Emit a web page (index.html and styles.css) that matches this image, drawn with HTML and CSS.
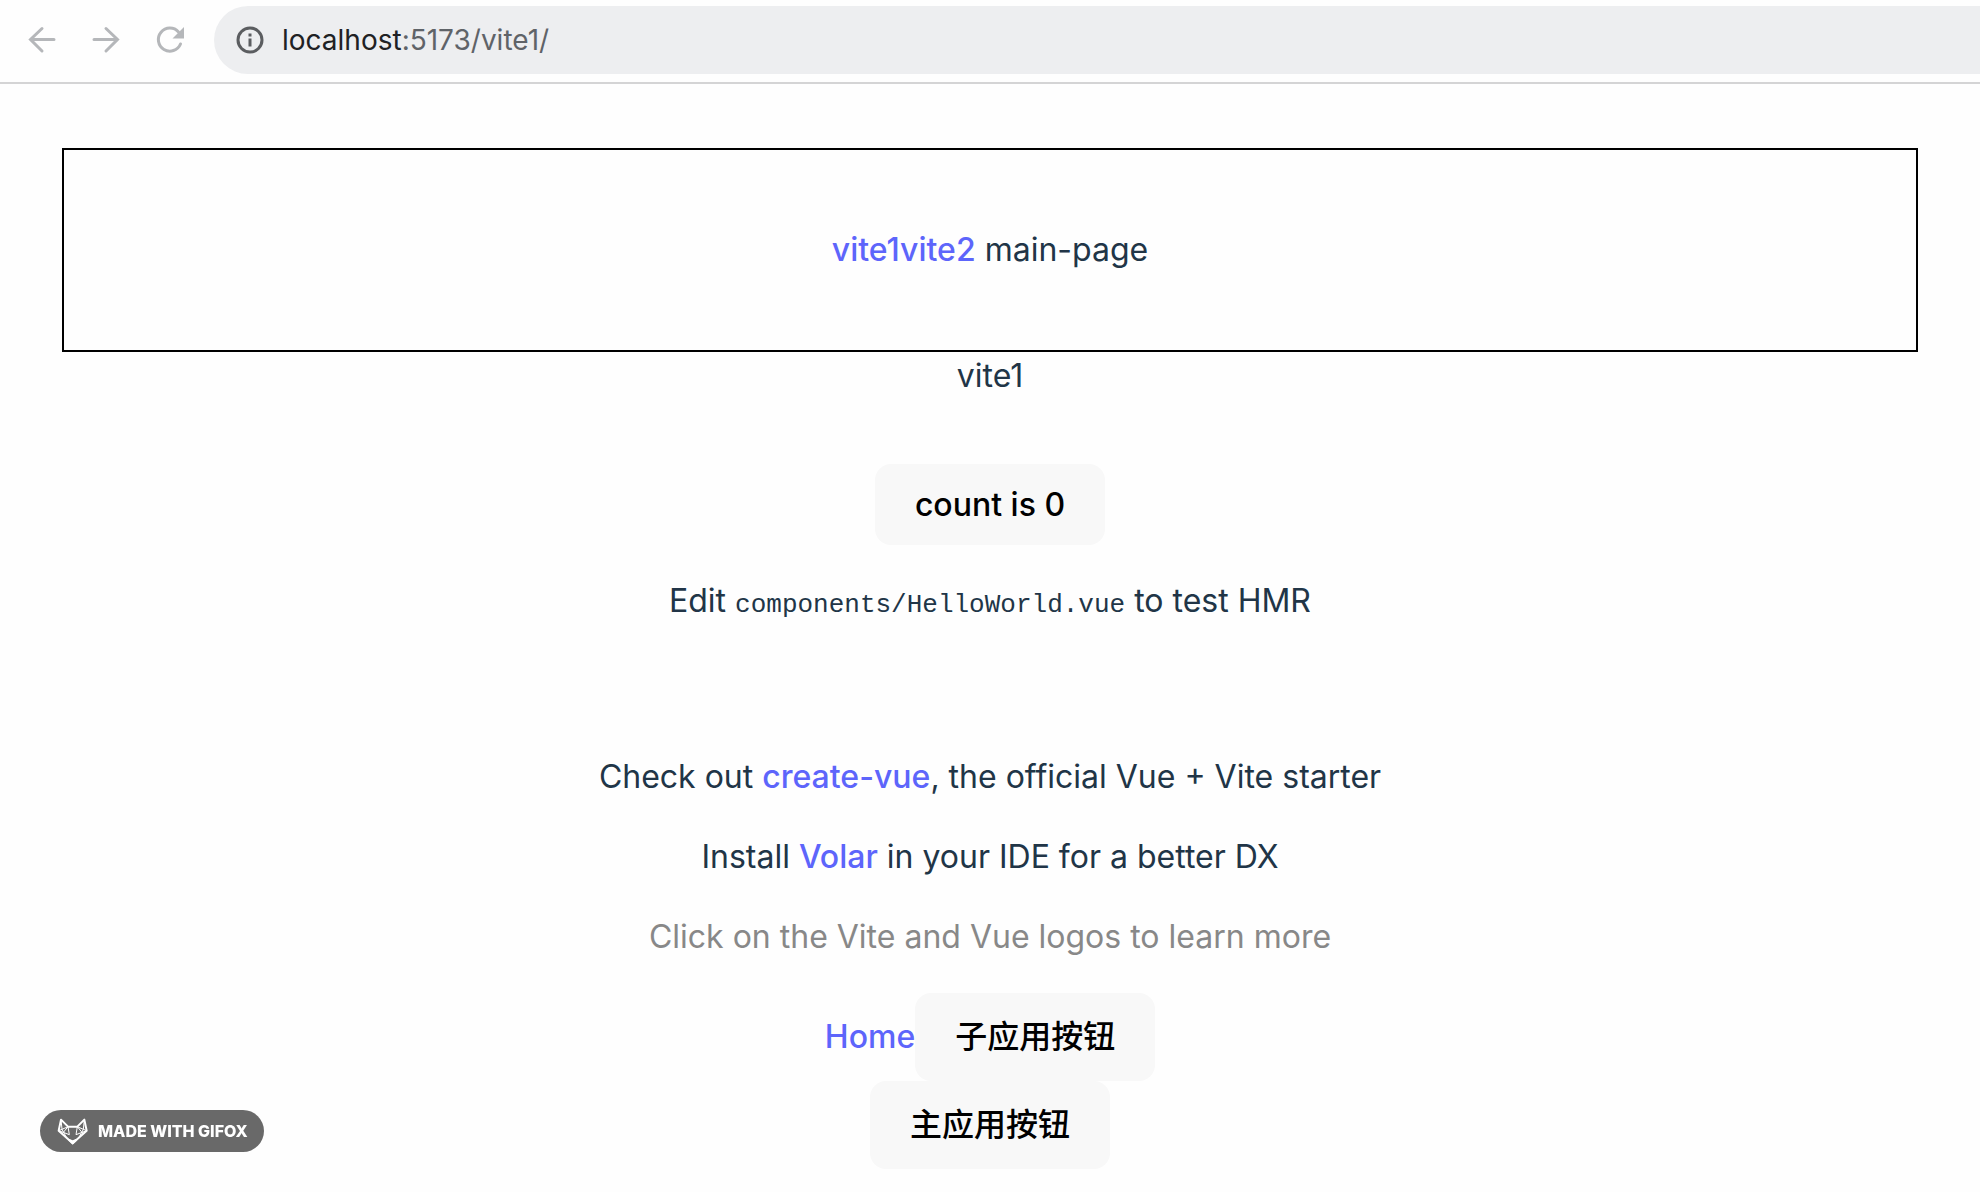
FILE: index.html
```html
<!DOCTYPE html>
<html lang="en">
<head>
<meta charset="utf-8">
<title>vite1</title>
<link rel="stylesheet" href="styles.css">
</head>
<body>
<header class="toolbar">
  <nav class="toolbar-nav" aria-label="Browser navigation">
    <button class="nav-button" type="button" aria-label="Back">
      <svg class="icon" viewBox="0 0 32 32"><path d="M28 15.500H5M16 4.500L4.500 15.500L16 27"/></svg>
    </button>
    <button class="nav-button" type="button" aria-label="Forward">
      <svg class="icon" viewBox="0 0 32 32"><path d="M4 15.500H27M16 4.500L27.500 15.500L16 27"/></svg>
    </button>
    <button class="nav-button" type="button" aria-label="Reload">
      <svg class="icon" viewBox="0 0 32 32"><path d="M26.500 20A11.500 11.500 0 1 1 24.500 8"/><path class="solid" d="M30 3v11.500H18.500z"/></svg>
    </button>
  </nav>
  <div class="address">
    <svg class="info-icon" viewBox="0 0 28 28"><circle cx="14" cy="14" r="12"/><path d="M14 12.500v8M14 7.500v3"/></svg>
    <a class="url" href="#"><span class="host">localhost</span>:5173/vite1/</a>
  </div>
</header>
<main class="app">
  <section class="main-page"><a class="link" href="#">vite1</a><a class="link" href="#">vite2</a> main-page</section>
  <section class="sub-app">
    <div>vite1</div>
    <div class="card">
      <button class="button" type="button">count is 0</button>
      <p class="text">Edit <code class="code">components/HelloWorld.vue</code> to test HMR</p>
    </div>
    <div class="notes">
      <p class="text">Check out <a class="link" href="#">create-vue</a>, the official Vue + Vite starter</p>
      <p class="text">Install <a class="link" href="#">Volar</a> in your IDE for a better DX</p>
      <p class="text muted">Click on the Vite and Vue logos to learn more</p>
    </div>
    <div class="actions">
      <a class="link" href="#">Home</a>
      <button class="button tall" type="button">子应用按钮</button>
    </div>
  </section>
  <button class="button tall" type="button">主应用按钮</button>
</main>
<div class="badge">
  <svg class="fox" viewBox="18 16 96 90"><path d="M33 27L54 48H82L103 27L110 60L68 98L26 60Z"/><path class="thin" d="M54 48L36 56L26 60L58 72L54 48M82 48L100 56L110 60L78 72L82 48M33 27L36 56L50 82M103 27L100 56L86 82M54 48L36 70M82 48L100 70"/><path class="snout" d="M58 88L68 92L78 88L68 98Z"/></svg>
  <span>MADE WITH GIFOX</span>
</div>
</body>
</html>
```
FILE: styles.css
```css
* {
  box-sizing: border-box;
}

body {
  margin: 0;
  min-height: 100vh;
  background: #fefefe;
  color: #213547;
  font-family: Inter, "Noto Sans CJK SC", sans-serif;
  font-size: 32px;
  line-height: 48px;
}

.toolbar {
  display: flex;
  align-items: center;
  gap: 28px;
  padding: 6px 0 8px 26px;
  border-bottom: 2px solid #d4d4d5;
}

.toolbar-nav {
  display: flex;
  gap: 32px;
}

.nav-button {
  display: flex;
  padding: 0;
  border: 0;
  background: none;
}

.icon {
  width: 32px;
  height: 32px;
  fill: none;
  stroke: #b5b7ba;
  stroke-width: 3;
  stroke-linecap: round;
}

.icon .solid {
  fill: #b5b7ba;
  stroke: none;
}

.address {
  display: flex;
  flex: 1;
  align-items: center;
  gap: 18px;
  padding: 10px 22px;
  border-radius: 34px 0 0 34px;
  background: #edeef0;
}

.info-icon {
  width: 28px;
  height: 28px;
  fill: none;
  stroke: #5b5d60;
  stroke-width: 3;
}

.url {
  color: #5f6368;
  font-size: 28px;
  text-decoration: none;
}

.host {
  color: #202124;
}

.app {
  display: flex;
  flex-direction: column;
  align-items: center;
  padding: 64px 62px 24px;
  text-align: center;
}

.main-page {
  align-self: stretch;
  padding: 76px 0;
  border: 2px solid #000;
}

.link {
  color: #5d65fb;
  font-weight: 500;
  text-decoration: none;
}

.card {
  padding: 64px 0;
}

.button {
  padding: 20px 40px;
  border: 0;
  border-radius: 16px;
  background: #f8f8f8;
  color: #000;
  font-family: inherit;
  font-size: 32px;
  font-weight: 500;
  line-height: 41px;
}

.button.tall {
  line-height: 48px;
}

.card .button {
  display: block;
  margin: 0 auto;
}

.text {
  margin: 32px 0;
}

.card .text {
  margin-bottom: 0;
}

.notes .text:first-child {
  margin-top: 64px;
}

.muted {
  color: #888;
}

.code {
  font-family: "Liberation Mono", monospace;
  font-size: 26px;
  line-height: 26px;
}

.actions {
  display: flex;
  align-items: center;
  justify-content: center;
}

.badge {
  position: fixed;
  bottom: 40px;
  left: 40px;
  display: flex;
  align-items: center;
  gap: 10px;
  padding: 5px 16px;
  border-radius: 21px;
  background: #696969;
  color: #fff;
  font-size: 16px;
  font-weight: 800;
  line-height: 32px;
}

.fox {
  width: 32px;
  height: 30px;
  fill: none;
  stroke: #fff;
  stroke-width: 6;
  stroke-linejoin: round;
}

.fox .thin {
  stroke-width: 3;
}

.fox .snout {
  fill: #fff;
}
```
